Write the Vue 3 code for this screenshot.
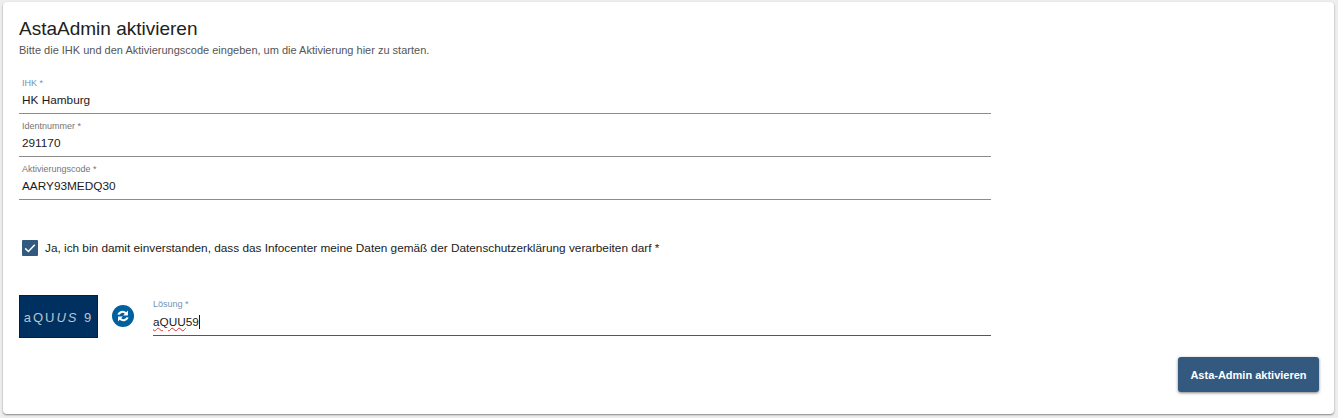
<script setup>
import { ref } from "vue"

const felder = ref([
  { label: "IHK *", wert: "HK Hamburg", blau: true },
  { label: "Identnummer *", wert: "291170" },
  { label: "Aktivierungscode *", wert: "AARY93MEDQ30" },
])
</script>

<template>
  <div class="page">
    <section class="card">
      <h1>AstaAdmin aktivieren</h1>
      <p class="sub">Bitte die IHK und den Aktivierungscode eingeben, um die Aktivierung hier zu starten.</p>

      <div class="fields">
        <div class="field" v-for="f in felder" :key="f.label">
          <span class="label" :class="{ blue: f.blau }">{{ f.label }}</span>
          <span class="value">{{ f.wert }}</span>
        </div>
      </div>

      <div class="check-row">
        <span class="check">
          <svg width="18" height="18" viewBox="0 0 18 18">
            <path d="M3.6 9.4l3.6 3.5 7.2-7.6" fill="none" stroke="#fff" stroke-width="1.7" />
          </svg>
        </span>
        <span class="check-text">Ja, ich bin damit einverstanden, dass das Infocenter meine Daten gemäß der Datenschutzerklärung verarbeiten darf *</span>
      </div>

      <div class="captcha-row">
        <div class="captcha"><span>aQU</span><i>US</i><span> 9</span></div>
        <button class="refresh" type="button" aria-label="Neu laden">
          <svg width="22" height="22" viewBox="0 0 22 22">
            <path d="M16 5.6l-.1 4.9h-4.8l1.7-1.8a3.4 3.4 0 0 0-5.3 1.1l-2.1-.3a5.5 5.5 0 0 1 8.9-2.3z" fill="#fff" />
            <path d="M6 16.4l.1-4.9h4.8l-1.7 1.8a3.4 3.4 0 0 0 5.3-1.1l2.1.3a5.5 5.5 0 0 1-8.9 2.3z" fill="#fff" />
          </svg>
        </button>
        <div class="field active">
          <span class="label blue">Lösung *</span>
          <span class="value"><span class="typo">aQUU</span>59<span class="cursor"></span></span>
        </div>
      </div>

      <div class="actions">
        <button class="submit" type="button">Asta-Admin aktivieren</button>
      </div>
    </section>
  </div>
</template>

<style>
html, body {
  margin: 0;
  background: #eeeeee;
}
</style>

<style scoped>
.page {
  width: 1338px;
  height: 418px;
  box-sizing: border-box;
  padding: 2px 4px 4px 3px;
  font-family: "Liberation Sans", Arial, sans-serif;
  overflow: hidden;
}

.card {
  height: 100%;
  box-sizing: border-box;
  background: #fff;
  border-radius: 4px;
  box-shadow: 0 1px 2px rgba(0, 0, 0, 0.45);
  padding: 16px 15px 0 16px;
}

h1 {
  margin: 0;
  font-size: 19px;
  line-height: 22px;
  font-weight: 400;
  color: #212121;
}

.sub {
  margin: 2px 0 0;
  font-size: 11px;
  line-height: 16px;
  color: #555;
}

.fields {
  margin-top: 13px;
  width: 972px;
}

.field {
  height: 43px;
  box-sizing: border-box;
  border-bottom: 1px solid #8c8c8c;
  padding: 7px 0 0 3px;
  display: flex;
  flex-direction: column;
}

.label {
  font-size: 9px;
  line-height: 11px;
  color: #757575;
}

.label.blue {
  color: #6f93b5;
}

.value {
  margin-top: 3px;
  font-size: 11.8px;
  line-height: 16px;
  color: #1a1a1a;
  display: flex;
  align-items: center;
}

.check-row {
  display: flex;
  align-items: center;
  gap: 7px;
  margin-top: 40px;
  margin-left: 3px;
}

.check {
  width: 16px;
  height: 16px;
  border-radius: 1px;
  background: #33597f;
  display: flex;
  align-items: center;
  justify-content: center;
}

.check-text {
  font-size: 11.8px;
  line-height: 16px;
  color: #212121;
}

.captcha-row {
  display: flex;
  align-items: flex-start;
  margin-top: 39px;
}

.captcha {
  width: 79px;
  height: 43px;
  box-sizing: border-box;
  border: 1px solid #0a1f33;
  padding-top: 1px;
  background: #00305f;
  color: #b7c6d2;
  font-family: "Liberation Sans", Arial, sans-serif;
  font-size: 13px;
  letter-spacing: 2px;
  display: flex;
  align-items: center;
  justify-content: center;
  white-space: pre;
}

.refresh {
  width: 22px;
  height: 22px;
  margin: 10px 19px 0 14px;
  padding: 0;
  border: 0;
  border-radius: 50%;
  background: #00609f;
  display: flex;
}

.captcha-row .field {
  width: 838px;
  height: 41px;
  padding-left: 0;
  padding-top: 4px;
  border-bottom-color: #1b679f;
}

.captcha-row .value {
  margin-top: 4px;
}

.typo {
  text-decoration: underline wavy #d33;
  text-decoration-thickness: 1px;
}

.cursor {
  width: 1px;
  height: 14px;
  background: #1a1a1a;
}

.actions {
  display: flex;
  justify-content: flex-end;
  margin-top: 19px;
}

.submit {
  width: 141px;
  height: 35px;
  border: 0;
  border-radius: 3px;
  background: #33597f;
  color: #fff;
  font-family: inherit;
  font-size: 11px;
  font-weight: 700;
  box-shadow: 0 1px 3px rgba(0, 0, 0, 0.5);
}
</style>
